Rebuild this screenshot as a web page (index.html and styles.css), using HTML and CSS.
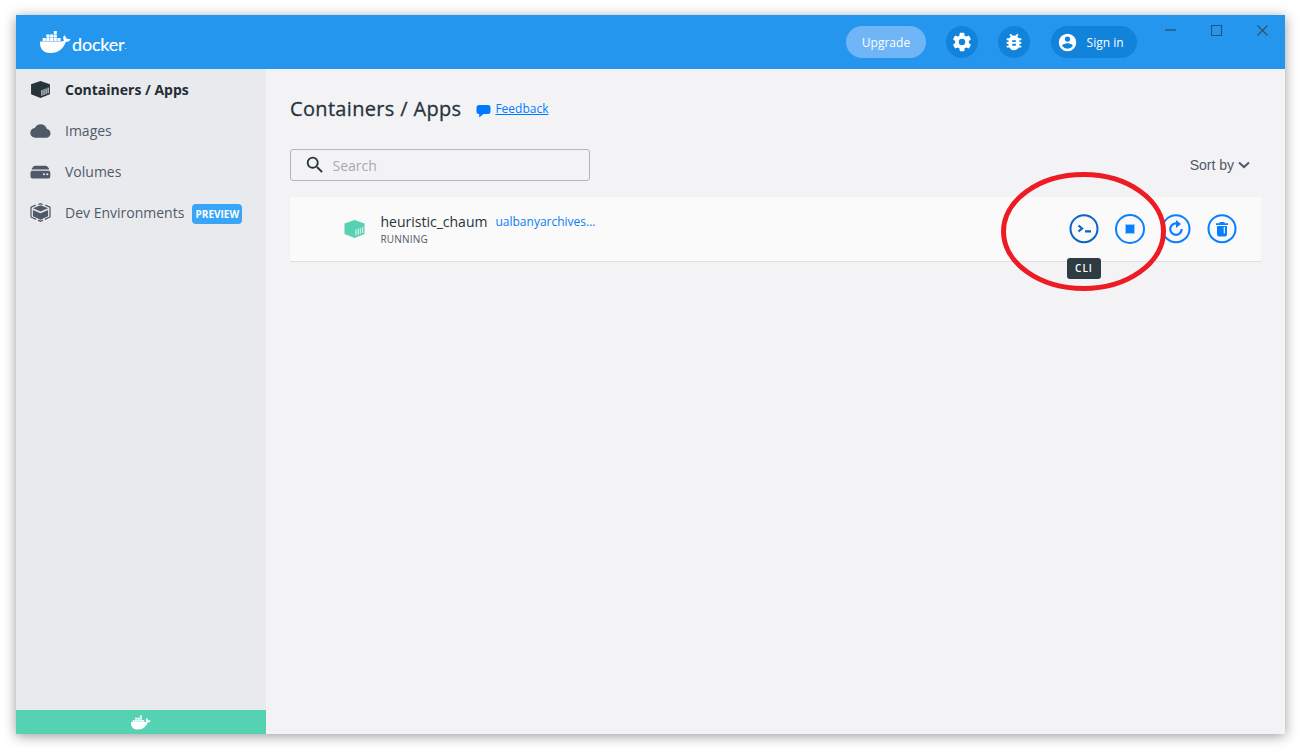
FILE: index.html
```html
<!DOCTYPE html>
<html lang="en">
<head>
<meta charset="utf-8">
<title>Docker Desktop</title>
<link rel="stylesheet" href="styles.css">
</head>
<body>
<svg class="sprite" aria-hidden="true">
  <symbol id="whale" viewBox="0 0 31 22">
    <path d="M13.8 0h3v3h-3zM6.4 3.5h3v3h-3zM10.1 3.5h3v3h-3zM13.8 3.5h3v3h-3zM2.7 7h3v3h-3zM6.4 7h3v3h-3zM10.1 7h3v3h-3zM13.8 7h3v3h-3zM17.5 7h3v3h-3z"/>
    <path opacity=".3" d="M6.400 3.500H16.800V7h3.700v3.500H2.700V7h3.700z"/>
    <path d="M0 10.400h20.800c1.200 0 2.300-.2 3.200-.7-1.200-1.800-1-4.100.2-5.500 1.400 1 2.100 2.300 2.300 3.600 1.500-.3 3-.1 4.100.6-.8 1.700-2.500 2.500-4.700 2.400C23.300 18.100 18.200 22 10.800 22 3.500 22-.4 18 0 10.400z"/>
  </symbol>
  <symbol id="box" viewBox="0 0 20 18">
    <path d="M10 0l10 3.500v10.500L10 18 0 14V3.500z"/>
    <path class="slats" d="M11.500 9.500v6M13.700 8.700v6M15.900 7.900v6M18.100 7v6"/>
  </symbol>
</svg>
<div class="window">
  <header class="topbar">
    <div class="logo"><svg class="logo-whale"><use href="#whale"/></svg><span class="wordmark">docker</span><span class="dot">.</span></div>
    <div class="top-actions">
      <button class="upgrade">Upgrade</button>
      <button class="round"><svg width="22" height="22" viewBox="0 0 24 24"><path d="M19.430 12.980c.04-.32.070-.64.070-.98s-.03-.66-.07-.98l2.110-1.650c.19-.15.240-.42.120-.64l-2-3.460c-.12-.22-.39-.3-.61-.22l-2.490 1c-.52-.4-1.080-.73-1.690-.98l-.38-2.650A.488.488 0 0 0 14 2h-4c-.25 0-.46.180-.49.420l-.38 2.650c-.61.250-1.170.590-1.690.980l-2.490-1c-.23-.09-.49 0-.61.220l-2 3.460c-.13.220-.07.490.120.640l2.110 1.650c-.04.320-.07.650-.07.980s.03.660.070.980l-2.110 1.650c-.19.150-.24.420-.12.640l2 3.460c.12.220.390.300.610.220l2.490-1c.52.400 1.080.730 1.690.980l.38 2.650c.03.240.240.420.490.420h4c.25 0 .46-.18.490-.42l.38-2.650c.61-.25 1.170-.59 1.690-.98l2.490 1c.23.090.490 0 .61-.22l2-3.460c.12-.22.070-.49-.12-.64zM12 15.500a3.500 3.500 0 1 1 0-7 3.500 3.500 0 0 1 0 7z"/></svg></button>
      <button class="round"><svg width="22" height="22" viewBox="0 0 24 24"><path d="M20 8h-2.810a5.985 5.985 0 0 0-1.820-1.960L17 4.410 15.590 3l-2.170 2.170a6.002 6.002 0 0 0-2.830 0L8.410 3 7 4.410l1.620 1.630C7.880 6.550 7.260 7.220 6.810 8H4v2h2.090c-.05.330-.09.660-.09 1v1H4v2h2v1c0 .34.040.670.090 1H4v2h2.810A5.990 5.990 0 0 0 17.190 18H20v-2h-2.090c.05-.33.090-.66.090-1v-1h2v-2h-2v-1c0-.34-.04-.67-.09-1H20V8zm-6 8h-4v-2h4v2zm0-4h-4v-2h4v2z"/></svg></button>
      <button class="signin"><svg width="21" height="21" viewBox="0 0 24 24"><path d="M12 2a10 10 0 1 0 0 20 10 10 0 0 0 0-20zm0 3a3 3 0 1 1 0 6 3 3 0 0 1 0-6zm0 14.200a7.200 7.200 0 0 1-6-3.220c.03-1.990 4-3.080 6-3.080 1.990 0 5.970 1.090 6 3.080a7.200 7.200 0 0 1-6 3.220z"/></svg><span>Sign in</span></button>
    </div>
    <div class="window-controls">
      <svg width="12" height="12"><path d="M0 5h11" stroke-width="2" opacity=".65"/></svg>
      <svg width="12" height="12"><path d="M.5.500h10v10h-10z"/></svg>
      <svg width="12" height="12"><path d="M.5.500l10 10M10.500.5l-10 10"/></svg>
    </div>
  </header>
  <div class="body">
    <aside class="sidebar">
      <nav class="menu">
        <a class="item active"><svg width="21" height="17"><use href="#box"/></svg><span>Containers / Apps</span></a>
        <a class="item"><svg width="21" height="18" viewBox="0 0 22 18"><path d="M17.700 7C17 3.800 14.300 2 11.100 2 8.300 2 6.200 3.500 5.100 5.900 2.300 6.100.3 8.100.3 10.900c0 3 2.300 5.100 5.100 5.100h11.400c2.600 0 4.700-1.900 4.700-4.500 0-2.500-1.700-4.300-3.800-4.500z"/></svg><span>Images</span></a>
        <a class="item"><svg width="21" height="18" viewBox="0 0 22 18"><path d="M5.500 2.500h10.800c1.500 0 3 1.700 4 4H1.500c1-2.300 2.500-4 4-4z"/><path fill-rule="evenodd" d="M2.500 7.700h16.800a2 2 0 0 1 2 2v4a2 2 0 0 1-2 2H2.500a2 2 0 0 1-2-2v-4a2 2 0 0 1 2-2zM14.700 10.200a1.100 1.100 0 1 0 0 2.200 1.100 1.100 0 0 0 0-2.200zm3.400 0a1.100 1.100 0 1 0 0 2.200 1.100 1.100 0 0 0 0-2.200z"/></svg><span>Volumes</span></a>
        <a class="item"><svg width="21" height="19" viewBox="0 0 22 20"><path d="M11 2.300l8 3.200L11 9 3 5.500zM3 7.300l8 3.500 8-3.500v6.700L11 17.500 3 14z"/><path class="brackets" d="M8.500 1.600L11 .7l2.500.9M6 2.300L1 4.500v10.200l5.300 2.500M16 2.300l5 2.200v10.200l-5.300 2.500M8.400 18l2.600 1.200 2.600-1.200"/></svg><span>Dev Environments</span><b class="badge">PREVIEW</b></a>
      </nav>
      <footer class="status"><svg width="20" height="15"><use href="#whale"/></svg></footer>
    </aside>
    <main class="content">
      <div class="heading">
        <h1>Containers / Apps</h1>
        <svg class="bubble" width="15" height="13" viewBox="0 0 15 13"><path d="M3 0h9a2.500 2.500 0 0 1 2.500 2.500v4A2.500 2.500 0 0 1 12 9H7.500l-4.300 3.500V9H3A2.500 2.500 0 0 1 .5 6.500v-4A2.500 2.500 0 0 1 3 0z"/></svg>
        <a class="feedback">Feedback</a>
      </div>
      <div class="toolbar">
        <label class="search"><svg width="22" height="22" viewBox="0 0 24 24"><path d="M15.500 14h-.79l-.28-.27A6.471 6.471 0 0 0 16 9.500 6.500 6.500 0 1 0 9.500 16c1.610 0 3.090-.59 4.230-1.570l.27.280v.79l5 4.990L20.490 19l-4.990-5zm-6 0a4.500 4.500 0 1 1 0-9 4.500 4.500 0 0 1 0 9z"/></svg><span>Search</span></label>
        <div class="sort"><span>Sort by</span><svg width="12" height="8" viewBox="0 0 12 8"><path d="M1 1.500l5 4.600 5-4.600"/></svg></div>
      </div>
      <section class="container-row">
        <svg class="status-icon" width="23" height="18" preserveAspectRatio="none"><use href="#box"/></svg>
        <div class="info">
          <div class="title"><span class="name">heuristic_chaum</span><a class="image">ualbanyarchives...</a></div>
          <div class="state">RUNNING</div>
        </div>
        <div class="actions">
          <div class="cli">
            <svg width="30" height="30" viewBox="0 0 30 30"><circle cx="15" cy="14.700" r="13.500"/><path class="prompt" d="M9.500 11.500l3.500 3-3.500 3M16 17.400h6"/></svg>
            <span class="tooltip">CLI</span>
          </div>
          <svg width="30" height="30" viewBox="0 0 30 30"><circle cx="15" cy="15" r="14"/><path class="solid light" d="M10 10h10v10H10z"/><path class="solid" d="M11 11h8v8h-8z"/></svg>
          <svg width="30" height="30" viewBox="0 0 30 30"><circle cx="15" cy="14.700" r="13.500"/><path class="arc" d="M15.500 9.500a5.700 5.700 0 1 0 5.100 5.500"/><path class="solid" d="M15 6l5 4.100-5 4z"/></svg>
          <svg width="30" height="30" viewBox="0 0 30 30"><circle cx="15" cy="14.700" r="13.500"/><path class="solid" d="M9 9.200h3.500V8h5v1.200H21V11H9zM10 12h10v8.500a2 2 0 0 1-2 2h-6a2 2 0 0 1-2-2z"/><path class="slit" d="M17.300 13v6.500"/></svg>
        </div>
      </section>
    </main>
  </div>
</div>
<svg class="annotation" width="168" height="122" viewBox="0 0 168 122"><ellipse cx="83.500" cy="61.500" rx="80" ry="57"/></svg>
</body>
</html>
```
FILE: styles.css
```css
* { box-sizing: border-box; }
body {
  margin: 0;
  padding: 15px 16px 19px;
  height: 753px;
  background: #fff;
  overflow: hidden;
  font-family: "Open Sans", "Noto Sans", sans-serif;
  color: #27343b;
}
svg { display: block; flex: none; }
.sprite { position: absolute; width: 0; height: 0; }
button { border: 0; padding: 0; font: inherit; color: #fff; }
.window {
  display: flex;
  flex-direction: column;
  height: 719px;
  box-shadow: 0 2px 12px rgba(0, 0, 0, .4);
}
.topbar { display: flex; height: 54px; background: #2496ed; color: #fff; }
.logo { display: flex; width: 830px; padding: 16px 0 0 24px; fill: #fff; }
.logo-whale { width: 31px; height: 22px; }
.wordmark {
  margin: 1.500px 0 0 1px;
  font: 18px/22px Lato, sans-serif;
  letter-spacing: -.2px;
  -webkit-text-stroke: .15px #fff;
}
.dot { font: 8px/30px Lato, sans-serif; }
.top-actions { display: flex; align-items: center; fill: #fff; font-size: 12px; }
.upgrade { width: 80px; height: 32px; margin-right: 20px; border-radius: 16px; background: #70b5f6; }
.round {
  display: grid;
  place-items: center;
  width: 32px;
  height: 32px;
  margin-right: 20.300px;
  border-radius: 50%;
  background: #1283da;
}
.signin {
  display: flex;
  align-items: center;
  gap: 9px;
  width: 86px;
  height: 32px;
  padding-left: 6px;
  border-radius: 16px;
  background: #1283da;
}
.window-controls { display: flex; gap: 34px; margin: 10px 0 0 28.400px; fill: none; stroke: #27536f; stroke-width: 1.100; }
.body { display: flex; flex: 1; }
.sidebar { display: flex; flex-direction: column; justify-content: space-between; width: 250px; background: #e9eaee; }
.item {
  display: flex;
  align-items: center;
  height: 41px;
  padding-left: 14px;
  font-size: 14px;
  color: #505968;
  fill: #505968;
}
.item span { margin-left: 14px; }
.active { font-weight: 700; color: #222d35; fill: #27343b; }
.slats { fill: none; stroke: #e9eaee; stroke-width: 1.300; opacity: .85; }
.brackets { fill: none; stroke: #505968; stroke-width: 1.300; }
.badge {
  height: 20px;
  margin: 3px 0 0 8px;
  width: 50px;
  border-radius: 4px;
  background: #38a5f8;
  color: #fff;
  font-size: 10px;
  line-height: 21px;
  text-align: center;
}
.status { display: grid; place-items: center; height: 24px; background: #55d2b2; fill: #fff; }
.content { flex: 1; padding: 24px 24px 0; background: #f3f3f6; }
.heading { display: flex; align-items: center; height: 32px; }
h1 {
  margin: 0;
  font-size: 20px;
  font-weight: 400;
  line-height: 32px;
  letter-spacing: .33px;
  -webkit-text-stroke: .3px #27343b;
}
.bubble { margin: 4px 4px 0 15px; fill: #007bff; }
.feedback { margin-top: -1px; font-size: 12px; color: #007bff; text-decoration: underline; }
.toolbar { display: flex; justify-content: space-between; align-items: center; height: 32px; margin-top: 24px; }
.search {
  display: flex;
  align-items: center;
  gap: 7px;
  width: 300px;
  height: 32px;
  padding-left: 12.500px;
  border: 1px solid #b3b6ba;
  border-radius: 3px;
  font-size: 14px;
  color: #a5a9ad;
  fill: #27343b;
}
.sort { display: flex; align-items: center; gap: 4px; padding-right: 11px; font: 14px "Liberation Sans", sans-serif; color: #505968; }
.sort path { fill: none; stroke: #505968; stroke-width: 2; }
.container-row {
  display: flex;
  align-items: center;
  height: 65px;
  margin-top: 16px;
  padding: 0 24px 0 53px;
  border-bottom: 1px solid #dcdee0;
  background: #fafafa;
}
.status-icon { fill: #55d2b2; }
.info { flex: 1; padding-left: 14.500px; }
.title { display: flex; align-items: center; gap: 8px; height: 20px; margin-top: -1px; }
.name { font-size: 14px; }
.image { font-size: 12px; color: #087ff5; }
.state { margin-top: 1px; font-size: 10px; line-height: 14px; letter-spacing: .2px; color: #505968; }
.actions { display: flex; gap: 16px; fill: none; stroke: #087fff; stroke-width: 2; }
.solid { fill: #087fff; stroke: none; }
.light { opacity: .4; }
.arc, .prompt { stroke-width: 2.200; }
.slit { stroke: #fafafa; stroke-width: 1.200; }
.cli { position: relative; stroke: #0864c9; }
.tooltip {
  position: absolute;
  top: 44px;
  left: -2px;
  width: 34px;
  height: 21px;
  border-radius: 3px;
  background: #2d3b43;
  color: #fff;
  font-size: 10px;
  font-weight: 600;
  line-height: 21px;
  letter-spacing: 1px;
  text-align: center;
}
.annotation { position: absolute; left: 1000px; top: 170px; fill: none; stroke: #ed1c24; stroke-width: 5; }
```
